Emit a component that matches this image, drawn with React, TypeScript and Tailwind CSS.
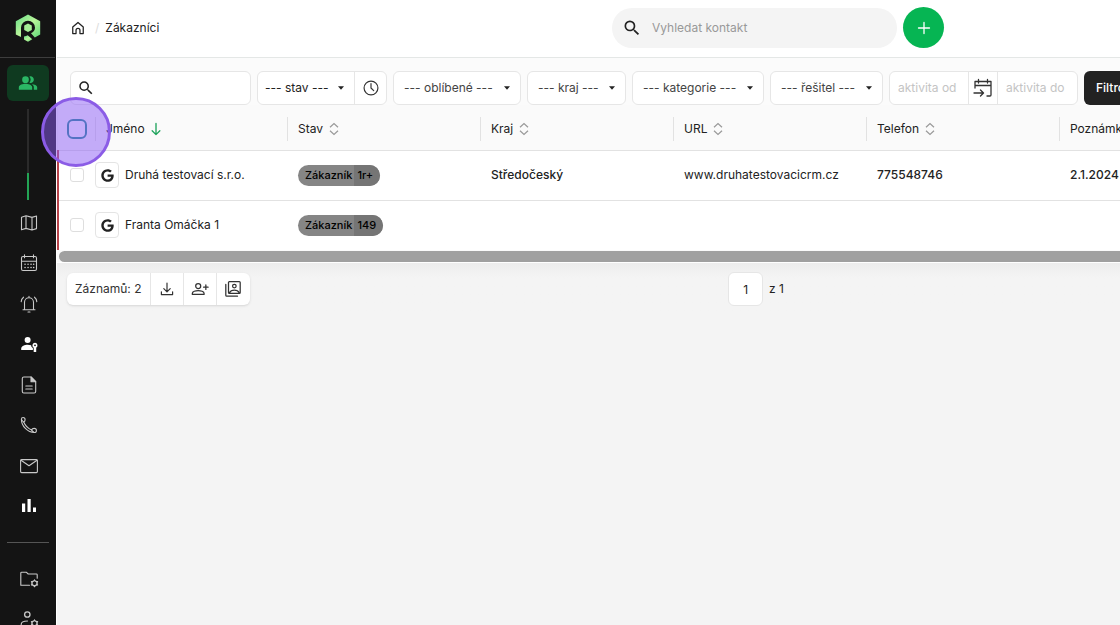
import type { ReactNode } from 'react';
import { FaGoogle } from 'react-icons/fa';
import { MdPeopleAlt, MdSearch } from 'react-icons/md';

interface Customer {
  id: number;
  name: string;
  age: string;
  region?: string;
  url?: string;
  phone?: string;
  note?: string;
}

const customers: Customer[] = [
  {
    id: 1,
    name: 'Druhá testovací s.r.o.',
    age: '1r+',
    region: 'Středočeský',
    url: 'www.druhatestovacicrm.cz',
    phone: '775548746',
    note: '2.1.2024',
  },
  { id: 2, name: 'Franta Omáčka 1', age: '149' },
];

const columns = ['Stav', 'Kraj', 'URL', 'Telefon', 'Poznámka'];

const Icon: React.FC<{ children: ReactNode; className?: string }> = ({ children, className = 'size-5' }) => (
  <svg
    viewBox="0 0 20 20"
    className={className}
    fill="none"
    stroke="currentColor"
    strokeWidth="1.1"
    strokeLinecap="round"
    strokeLinejoin="round"
    aria-hidden="true"
  >
    {children}
  </svg>
);

const navItems = [
  {
    label: 'Mapa',
    icon: (
      <Icon>
        <path d="M2.5 4.2 7 2.8l6 1.6 4.5-1.4v12.6L13 17l-6-1.6-4.5 1.4zM7 2.8v12.6M13 4.4V17" />
      </Icon>
    ),
  },
  {
    label: 'Kalendář',
    icon: (
      <Icon>
        <rect x="2.5" y="3.5" width="15" height="14" rx="1.5" />
        <path d="M2.5 8.2h15M5.5 1.8v3M14.5 1.8v3" />
        <path d="M6 11.2h.1M9 11.2h.1M12 11.2h.1M14.6 11.2h.1M6 14.4h.1M9 14.4h.1M12 14.4h.1M14.6 14.4h.1" strokeWidth="1.5" />
      </Icon>
    ),
  },
  {
    label: 'Upozornění',
    icon: (
      <Icon>
        <path d="M4 15.8h12M5.5 15.8V8.2a4.5 4.5 0 0 1 9 0v7.6M10 3.7V2.2M9 18h2M4.5 3.2C3 4.4 2.3 5.8 2.2 7.6M15.5 3.2c1.5 1.2 2.2 2.6 2.3 4.4" />
      </Icon>
    ),
  },
  {
    label: 'Přístupy',
    icon: (
      <Icon className="size-5 text-white">
        <g fill="currentColor" stroke="none">
          <circle cx="8.6" cy="6.1" r="3" />
          <path d="M2.2 16v-1.6c0-2.3 3.6-3.7 6.4-3.7 1.2 0 2.4.2 3.5.6.1 1.3.8 2.2 1.8 2.8V16z" />
          <path fillRule="evenodd" d="M16 8.8a2.7 2.7 0 0 0-1.3 5v4.2h2.5v-4.2a2.7 2.7 0 0 0-1.2-5zm0 1.6a.9.9 0 1 1 0 1.8.9.9 0 0 1 0-1.8z" />
        </g>
      </Icon>
    ),
  },
  {
    label: 'Dokumenty',
    icon: (
      <Icon>
        <path d="M12 2H4.8a1.5 1.5 0 0 0-1.5 1.5v13A1.5 1.5 0 0 0 4.8 18h10.4a1.5 1.5 0 0 0 1.5-1.5V6.7zM6.8 11h6.4M6.8 14h6.4" />
        <path d="M12 2v4.7h4.7z" fill="currentColor" />
      </Icon>
    ),
  },
  {
    label: 'Hovory',
    icon: (
      <Icon>
        <path d="M2.4 4.2c0-1 .7-1.7 1.7-1.7 1.3 0 2 .7 2 2.2 0 1.4-.5 1.9-1.4 2.3 1.7 4 4.4 6.5 7.9 8 .4-1.1 1.2-1.6 2.5-1.6 1.5 0 2.3.7 2.3 2s-.8 2.1-2 2.1C8.7 17.5 2.4 11.2 2.4 4.2z" />
        <path d="M4.7 7c-.8-.4-1.5-1-1.7-2M12.6 15c.5.9 1.1 1.6 2 2" />
      </Icon>
    ),
  },
  {
    label: 'E-maily',
    icon: (
      <Icon>
        <rect x="1.6" y="3.6" width="16.8" height="13" rx="1" />
        <path d="m2 4.2 8 5.5 8-5.5" />
      </Icon>
    ),
  },
  {
    label: 'Statistiky',
    icon: (
      <Icon className="size-5 text-white">
        <path d="M3 7.5h3.2V16H3zM8.5 3h3.2v13H8.5zM14 11.5h3V16h-3z" fill="currentColor" stroke="none" />
      </Icon>
    ),
  },
];

const Gear: React.FC = () => (
  <>
    <path d="m15.5 11.5 2.5 1.4v2.8l-2.5 1.4-2.5-1.4v-2.8z" strokeWidth="1.4" />
    <path d="M15.5 10.8v.7M15.5 17.1v.7M12.4 12.6l.6.3M18 15.7l.6.3M12.4 16l.6-.3M18 12.9l.6-.3" />
  </>
);

const Logo: React.FC = () => (
  <svg viewBox="0 0 26 28" className="h-7 w-[26px]" aria-hidden="true">
    <defs>
      <linearGradient id="logo" x1="0" y1="0" x2="1" y2="1">
        <stop offset="0" stopColor="#62dc86" />
        <stop offset="0.5" stopColor="#b9f59a" />
        <stop offset="1" stopColor="#5fd877" />
      </linearGradient>
    </defs>
    <path
      d="M13 .5 25.2 7.2v13.4l-5.4 3-3.8-4.3c2.5-1 4-3 4-5.5a7 7 0 0 0-14 0v9.3L.8 20.6V7.2z"
      fill="url(#logo)"
    />
    <path d="m13 9.4 3.8 2.2v4.3L13 18.1l-3.8-2.2v-4.3z" fill="#a5ee95" />
    <path d="M9 22.5c1.5-.2 2.7-.6 3.7-1.2l4.6 4-4.3 2.4-4-2.3z" fill="url(#logo)" />
  </svg>
);

const SortIcon: React.FC = () => (
  <svg viewBox="0 0 10 14" className="h-3.5 w-2.5 text-[#999]" fill="none" stroke="currentColor" strokeWidth="1.2" aria-hidden="true">
    <path d="M1 5.2 5 1.5l4 3.7M1 8.8l4 3.7 4-3.7" />
  </svg>
);

const Sidebar: React.FC = () => (
  <aside className="flex w-[57px] shrink-0 flex-col overflow-hidden border-r border-white bg-[#141414] pr-px text-[#c9c9c9]">
    <a href="#" aria-label="Úvod" className="flex h-[58px] shrink-0 items-center justify-center border-b border-[#3d3d3d] pb-0.5">
      <Logo />
    </a>
    <a
      href="#"
      aria-label="Zákazníci"
      className="ml-[7px] mt-[7px] flex h-9 w-[42px] shrink-0 items-center justify-center rounded-md bg-[#0f3a20] text-[#2bb765]"
    >
      <MdPeopleAlt className="size-5" />
    </a>
    <div className="mx-auto mt-2 h-16 w-0.5 shrink-0 bg-[#2b2b2b]" />
    <div className="mx-auto h-[27px] w-0.5 shrink-0 bg-[#23a455]" />
    <nav className="mt-[3px] flex shrink-0 flex-col pl-[9px]">
      <div className="flex h-[323px] flex-col justify-between">
        {navItems.map((item) => (
          <a key={item.label} href="#" aria-label={item.label} className="flex size-10 items-center justify-center">
            {item.icon}
          </a>
        ))}
      </div>
      <hr className="-ml-0.5 mt-4 w-[42px] border-[#555]" />
      <a href="#" aria-label="Nastavení složek" className="mt-4 flex size-10 items-center justify-center">
        <Icon>
          <path d="M10.5 16.2H1.8V4c0-.5.3-.8.8-.8h4.6l2 1.8h8.2c.5 0 .8.3.8.8v3.5" />
          <Gear />
        </Icon>
      </a>
      <a href="#" aria-label="Nastavení uživatelů" className="flex size-10 items-center justify-center">
        <Icon>
          <circle cx="8.3" cy="5.5" r="2.7" strokeWidth="1.3" />
          <path d="M9.5 17.5H2.2v-2.2c0-2 2.8-3.3 6.3-3.3" />
          <Gear />
        </Icon>
      </a>
    </nav>
  </aside>
);

const Topbar: React.FC = () => (
  <header className="flex h-[58px] items-center border-b border-[#e4e7e6] bg-white pb-0.5 pl-3.5 pr-44">
    <nav aria-label="Drobečková navigace" className="flex flex-1 items-center">
      <a href="#" aria-label="Domů">
        <Icon className="size-3.5 text-[#222]">
          <path
            d="M2.5 8.5 10 2l7.5 6.5V18h-4.7v-4.7a2.8 2.8 0 0 0-5.6 0V18H2.5z"
            strokeWidth="1.8"
          />
        </Icon>
      </a>
      <span className="ml-2.5 text-[#ddd]">/</span>
      <a href="#" className="ml-1.5">Zákazníci</a>
    </nav>
    <label className="flex h-10 w-[285px] items-center gap-2.5 rounded-full bg-[#f4f4f4] pl-2.5">
      <MdSearch className="size-5 text-[#222]" />
      <input
        type="text"
        aria-label="Vyhledat kontakt"
        placeholder="Vyhledat kontakt"
        className="min-w-0 flex-1 bg-transparent outline-none placeholder:text-[#999]"
      />
    </label>
    <button
      aria-label="Přidat kontakt"
      className="ml-1.5 flex size-[41px] shrink-0 items-center justify-center rounded-full bg-[#06b553] text-white"
    >
      <Icon>
        <path d="M10 4.5v11M4.5 10h11" strokeWidth="1.3" />
      </Icon>
    </button>
  </header>
);

interface FilterSelectProps {
  label: string;
  className: string;
  textClass?: string;
}

const FilterSelect: React.FC<FilterSelectProps> = ({ label, className, textClass = 'pl-2.5 text-[#444]' }) => (
  <div className={`relative shrink-0 ${className}`}>
    <select aria-label={label} className={`block h-full w-full appearance-none bg-transparent outline-none ${textClass}`}>
      <option>--- {label} ---</option>
    </select>
    <svg viewBox="0 0 6 4" className="pointer-events-none absolute right-2.5 top-3.5 h-1 w-1.5" aria-hidden="true">
      <path d="M0 .3h6L3 3.7z" fill="#222" />
    </svg>
  </div>
);

const box = 'h-[34px] shrink-0 rounded-md border border-[#e6e6e6] bg-white';

const Filters: React.FC = () => (
  <form className="flex gap-1.5 overflow-hidden bg-[#fbfbfb] pl-[13px] pt-[13px]">
    <label className={`${box} flex w-[181px] items-center pl-1.5`}>
      <MdSearch className="size-[18px] text-[#222]" />
      <input type="text" aria-label="Hledat" className="min-w-0 flex-1 bg-transparent outline-none" />
    </label>
    <div className={`${box} flex w-[130px]`}>
      <FilterSelect label="stav" className="w-24" textClass="pl-[7px] text-[#222]" />
      <button type="button" aria-label="Historie" className="flex flex-1 items-center justify-center border-l border-[#e6e6e6] text-[#333]">
        <Icon className="size-[18px]">
          <circle cx="10" cy="10" r="7.7" strokeWidth="1.3" />
          <path d="M10 5v5l3 3" strokeWidth="1.3" />
        </Icon>
      </button>
    </div>
    <FilterSelect label="oblíbené" className={`${box} w-32`} />
    <FilterSelect label="kraj" className={`${box} w-[99px]`} />
    <FilterSelect label="kategorie" className={`${box} w-[132px]`} />
    <FilterSelect label="řešitel" className={`${box} w-[113px]`} />
    <div className={`${box} flex w-[189px]`}>
      <input type="text" aria-label="aktivita od" placeholder="aktivita od" className="w-[78px] pl-2 outline-none placeholder:text-[#c4c4c4]" />
      <button type="button" aria-label="Vybrat období" className="flex w-[30px] items-center justify-center border-x border-[#e6e6e6] text-[#333]">
        <Icon>
          <path d="M2 10V3.5h16V17q0 1-1 1h-3M2 7.5h16M5.5 1.5V5M14.5 1.5V5M1 15h9M7.5 12l3 3-3 3" strokeWidth="1.3" />
        </Icon>
      </button>
      <input type="text" aria-label="aktivita do" placeholder="aktivita do" className="w-[78px] pl-2 outline-none placeholder:text-[#c4c4c4]" />
    </div>
    <button type="button" className="h-[34px] shrink-0 rounded-md bg-[#222] px-3 font-medium text-white">
      Filtrovat
    </button>
  </form>
);

const CustomerTable: React.FC = () => (
  <div className="overflow-hidden">
    <table className="w-[1388px] table-fixed">
      <thead className="bg-[#fafafa]">
        <tr className="h-[45px] border-b border-[#e2e2e2] align-top">
          <th className="w-[37px] pt-3.5">
            <input
              type="checkbox"
              aria-label="Vybrat vše"
              className="mx-auto block size-5 appearance-none rounded-md border-2 border-[#1d8a90] bg-white"
            />
          </th>
          <th className="w-[192px] pt-3 text-left font-normal">
            <div className="flex h-6 items-center gap-1 border-l border-[#e2e2e2] pl-2.5">
              Jméno
              <Icon className="size-3.5 text-[#1fa35c]">
                <path d="M10 2v16M4.5 12.5 10 18l5.5-5.500" strokeWidth="1.9" />
              </Icon>
            </div>
          </th>
          {columns.map((column) => (
            <th key={column} className="pt-3 text-left font-normal">
              <div className="flex h-6 items-center gap-1.5 border-l border-[#e2e2e2] pl-2.5">
                {column}
                <SortIcon />
              </div>
            </th>
          ))}
          <th />
        </tr>
      </thead>
      <tbody className="bg-white">
        {customers.map((customer) => (
          <tr key={customer.id} className="h-[50px] border-b border-[#e2e2e2] last:border-b-0">
            <td className="border-l-2 border-l-[#b8434a] p-0">
              <input
                type="checkbox"
                aria-label={`Vybrat ${customer.name}`}
                className="mx-auto block size-3.5 appearance-none rounded-[3px] border border-[#dedede] bg-white"
              />
            </td>
            <td className="p-0">
              <div className="flex items-center gap-1.5">
                <a
                  href="#"
                  aria-label={`Google: ${customer.name}`}
                  className="flex h-[26px] w-6 items-center justify-center rounded border border-[#e4e4e4] text-[#222]"
                >
                  <FaGoogle className="size-[13px]" />
                </a>
                <a href="#">{customer.name}</a>
              </div>
            </td>
            <td className="pl-[11px]">
              <span className="inline-flex h-[21px] items-center overflow-hidden rounded-full bg-[#858585] align-middle text-[11px] font-medium text-black">
                <span className="pl-[7px] pr-0.5">Zákazník</span>
                <span className="flex h-full items-center bg-[#757575] pl-[3px] pr-[7px]">{customer.age}</span>
              </span>
            </td>
            <td className="pl-[11px] font-medium">{customer.region}</td>
            <td className="pl-[11px]">{customer.url && <a href="#">{customer.url}</a>}</td>
            <td className="pl-[11px] font-medium">{customer.phone}</td>
            <td className="pl-[11px] font-medium">{customer.note}</td>
            <td />
          </tr>
        ))}
      </tbody>
    </table>
    <div className="border-b border-white bg-[#fafafa] pl-0.5 pt-px">
      <div className="h-[11px] rounded-l-full bg-[#a0a0a0]" />
    </div>
  </div>
);

const TableFooter: React.FC = () => (
  <footer className="flex items-center justify-between bg-linear-to-b from-[#ededed] to-[#f4f4f4] to-30% pb-2 pl-2.5 pr-[336px] pt-[9px]">
    <div className="flex h-8 divide-x divide-[#e6e6e6] overflow-hidden rounded-md bg-white text-[#333] shadow-sm">
      <span className="flex items-center px-2">Záznamů: 2</span>
      <button aria-label="Stáhnout" className="flex w-[33px] items-center justify-center">
        <Icon className="size-4">
          <path d="M10 2.500v10.500M6 9.500l4 4 4-4M3 13.500V17h14v-3.500" strokeWidth="1.5" />
        </Icon>
      </button>
      <button aria-label="Přidat osobu" className="flex w-[33px] items-center justify-center">
        <Icon className="size-[18px]">
          <circle cx="8" cy="6.8" r="2.8" strokeWidth="1.4" />
          <path d="M1.5 16v-1.3c0-1.8 3.5-3 6.5-3s6.5 1.2 6.5 3V16zM16.5 5.500v5M14 8h5" strokeWidth="1.4" />
        </Icon>
      </button>
      <button aria-label="Vizitky" className="flex w-[33px] items-center justify-center">
        <Icon className="size-[18px]">
          <rect x="5" y="1.8" width="13" height="13" rx="1" strokeWidth="1.4" />
          <circle cx="11.5" cy="6.8" r="2" strokeWidth="1.4" />
          <path d="M6 14.3c1-2 3-3 5.500-3s4.500 1 5.500 3M2 5v12q0 1 1 1h12" strokeWidth="1.4" />
        </Icon>
      </button>
    </div>
    <label className="flex items-center gap-1.5">
      <input
        type="text"
        defaultValue="1"
        aria-label="Stránka"
        className="h-[34px] w-[35px] rounded-md border border-[#e6e6e6] bg-white text-center outline-none"
      />
      z 1
    </label>
  </footer>
);

const App: React.FC = () => (
  <div className="flex h-screen overflow-hidden bg-[#f4f4f4] font-['Inter',sans-serif] text-[12px] text-[#222]">
    <Sidebar />
    <main className="relative min-w-0 flex-1">
      <Topbar />
      <Filters />
      <CustomerTable />
      <TableFooter />
      {/* Highlight ring around the select-all box */}
      <span className="pointer-events-none absolute left-[-16px] top-[97px] size-[70px] rounded-full border-[3px] border-[#8b5ce6] bg-[#8b5cf6]/50" />
    </main>
  </div>
);

export default App;
